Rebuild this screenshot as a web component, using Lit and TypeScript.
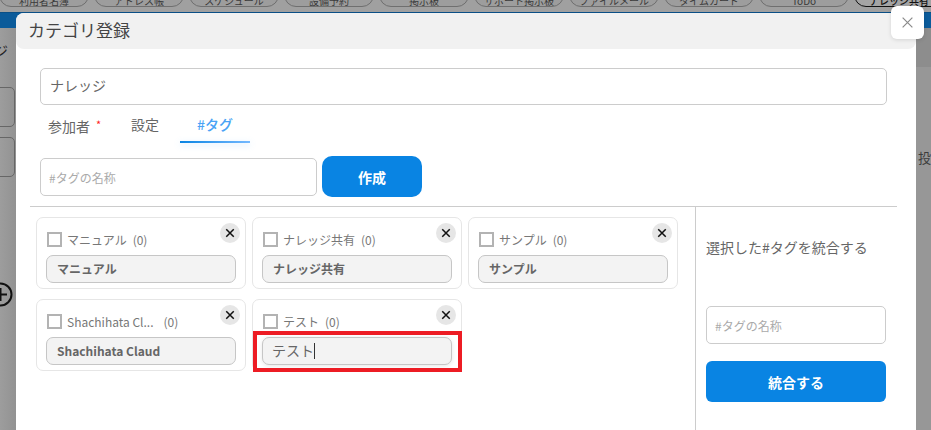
import { LitElement, html, css } from "lit";
import { customElement } from "lit/decorators.js";

const NAV = ["利用者名簿", "アドレス帳", "スケジュール", "設備予約", "掲示板", "サポート掲示板", "ファイルメール", "タイムカード", "ToDo", "ナレッジ共有"];
const TAGS = [
  { label: "マニュアル", count: "(0)", name: "マニュアル" },
  { label: "ナレッジ共有", count: "(0)", name: "ナレッジ共有" },
  { label: "サンプル", count: "(0)", name: "サンプル" },
  { label: "Shachihata Cl...", count: "(0)", name: "Shachihata Claud", gap: true },
  { label: "テスト", count: "(0)", name: "テスト", focus: true },
];

const cross = (cls: string) => html`<svg class=${cls} viewBox="0 0 12 12"><path d="M1.5 1.5 10.5 10.5M10.5 1.5 1.5 10.5"/></svg>`;

@customElement("app-root")
export class AppRoot extends LitElement {
  static styles = css`
    :host {
      display: block;
      position: relative;
      width: 931px;
      height: 430px;
      overflow: hidden;
      background: #979797;
      font-family: "Noto Sans CJK JP", "Noto Sans", sans-serif;
      color: #666;
    }
    * { box-sizing: border-box; }
    .nav {
      display: flex;
      gap: 5px;
      height: 12px;
      margin-left: -1px;
      background: #a0a0a0;
      overflow: hidden;
    }
    .pill {
      flex: none;
      width: 90px;
      height: 24px;
      margin-top: -17px;
      border: 1px solid #6f6f6f;
      border-radius: 12px;
      background: #9d9d9d;
      font-size: 10px;
      line-height: 33px;
      text-align: center;
      color: #3a3a3a;
    }
    .pill.active { border-color: #111; background: #a4a4a4; color: #111; font-weight: 500; white-space: nowrap; }
    .band { height: 16px; background: #0b5b9a; border-top: 1px solid #0a4f86; }
    .under { display: flex; justify-content: space-between; height: 402px; }
    .under-left { width: 16px; overflow: hidden; position: relative; background: linear-gradient(90deg, #9d9d9d, #929292); }
    .under-right { width: 15px; overflow: hidden; background: linear-gradient(#8d8d8d 0 39px, #979797 39px); padding: 120px 0 0 2px; font-size: 13px; white-space: nowrap; color: #3c3c3c; }
    .jig { margin: 12px 0 0 -6px; font-size: 14px; line-height: 20px; color: #222; }
    .ghost { width: 30px; margin-left: -15px; border: 1px solid #666; border-radius: 5px; height: 40px; }
    .ghost.one { margin-top: 27px; }
    .ghost.two { margin-top: 10px; }
    .plus { margin: 105px 0 0 -12px; display: block; width: 25px; height: 25px; }
    .plus path, .plus circle { fill: none; stroke: #111; stroke-width: 2; }

    .modal {
      position: absolute;
      left: 16px;
      top: 13px;
      width: 900px;
      height: 417px;
      background: #fff;
      border-radius: 8px 8px 0 0;
      display: flex;
      flex-direction: column;
    }
    .head {
      height: 36px;
      padding-left: 12px;
      background: #f1f1f1;
      border-radius: 8px;
      font-size: 17px;
      line-height: 34px;
      color: #444;
    }
    .close {
      position: absolute;
      left: 875px;
      top: -7px;
      width: 33px;
      height: 33px;
      display: flex;
      align-items: center;
      justify-content: center;
      background: #fff;
      border-radius: 6px;
      box-shadow: 0 1px 4px rgba(0,0,0,.12);
    }
    .close-x { width: 13px; height: 13px; }
    .close-x path { stroke: #8a8a8a; stroke-width: 1.1; fill: none; }
    .title-field {
      margin: 19px 29px 0 24px;
      height: 37px;
      padding-left: 9px;
      border: 1px solid #ccc;
      border-radius: 5px;
      font-size: 14px;
      line-height: 33px;
      color: #666;
    }
    .tabs { display: flex; margin: 0 0 0 24px; height: 38px; font-size: 14px; }
    .tab { line-height: 38px; color: #666; }
    .tab.a { margin-left: 8px; width: 83px; }
    .req { color: #f22; font-size: 11px; vertical-align: 3px; margin-left: 6px; }
    .tab.b { width: 49px; }
    .tab.c {
      width: 70px;
      height: 38px;
      text-align: center;
      color: #4aa3f5;
      font-weight: 500;
      position: relative;
    }
    .tab.c::after {
      content: "";
      position: absolute;
      left: 0;
      right: 0;
      bottom: 0;
      height: 2px;
      background: linear-gradient(90deg, #0984e3, #74b9ff);
      box-shadow: 0 2px 6px rgba(116,185,255,.35);
    }
    .create { display: flex; align-items: center; gap: 5px; margin: 13px 0 0 24px; height: 41px; }
    .ph {
      height: 38px;
      padding-left: 8px;
      border: 1px solid #ccc;
      border-radius: 5px;
      font-size: 12px;
      line-height: 38px;
      color: #aaa;
    }
    .create .ph { width: 277px; }
    .btn {
      background: #0984e3;
      color: #fff;
      font-size: 14px;
      font-weight: 700;
      text-align: center;
      height: 41px;
      line-height: 43px;
    }
    .create .btn { width: 100px; border-radius: 10px; }
    .rule { margin: 9px 19px 0 14px; height: 1px; background: #ccc; flex: none; }
    .lower { display: flex; flex: 1; margin-left: 14px; }
    .grid {
      width: 666px;
      padding: 10px 0 0 6px;
      display: grid;
      grid-template-columns: repeat(3, 210px);
      grid-auto-rows: 72px;
      gap: 10px 6px;
      align-content: start;
      border-right: 1px solid #ccc;
    }
    .card {
      position: relative;
      border: 1px solid #e6e6e6;
      border-radius: 7px;
      padding: 11px 9px 0 9px;
    }
    .row { display: flex; align-items: center; height: 20px; padding-left: 1px; font-size: 12px; color: #777; white-space: nowrap; }
    .box { width: 15px; height: 15px; border: 2px solid #b3b3b3; margin-right: 5px; flex: none; }
    .count { margin-left: 6px; }
    .count.wide { margin-left: 10px; }
    .del {
      position: absolute;
      left: 183px;
      top: 5px;
      width: 20px;
      height: 20px;
      border-radius: 50%;
      background: #e6e6e6;
      display: flex;
      align-items: center;
      justify-content: center;
    }
    .del-x { width: 10px; height: 10px; }
    .del-x path { stroke: #111; stroke-width: 1.8; fill: none; }
    .tag {
      margin-top: 6px;
      height: 28px;
      padding-left: 10px;
      background: #f3f3f3;
      border: 1px solid #c6c6c6;
      border-radius: 7px;
      font-size: 12px;
      font-weight: 700;
      line-height: 26px;
      color: #666;
    }
    .tag.focus {
      padding-left: 9px;
      font-size: 14px;
      font-weight: 400;
      line-height: 25px;
      box-shadow: 0 1px 4px rgba(0,0,0,.1);
    }
    .caret { display: inline-block; width: 1px; height: 16px; background: #333; vertical-align: -3px; }
    .mark {
      position: absolute;
      left: 0;
      top: 31px;
      width: 209px;
      height: 41px;
      border: 4px solid #ed1c24;
      pointer-events: none;
    }
    .side { width: 180px; margin-left: 10px; display: flex; flex-direction: column; }
    .side-title { margin-top: 30px; font-size: 14px; line-height: 20px; color: #666; }
    .side .ph { margin-top: 49px; width: 180px; }
    .side .btn { margin-top: 17px; border-radius: 6px; }
  `;

  render() {
    return html`
      <div class="nav">${NAV.map((n, i) => html`<div class="pill ${i === 9 ? "active" : ""}">${n}</div>`)}</div>
      <div class="band"></div>
      <div class="under">
        <div class="under-left">
          <div class="jig">ジ</div>
          <div class="ghost one"></div>
          <div class="ghost two"></div>
          <svg class="plus" viewBox="0 0 25 25"><circle cx="12.5" cy="12.5" r="11"/><path d="M6 12.5h13M12.5 6v13"/></svg>
        </div>
        <div class="under-right">投稿</div>
      </div>
      <div class="modal">
        <div class="head">カテゴリ登録</div>
        <div class="close">${cross("close-x")}</div>
        <div class="title-field">ナレッジ</div>
        <div class="tabs">
          <div class="tab a">参加者<span class="req">*</span></div>
          <div class="tab b">設定</div>
          <div class="tab c">#タグ</div>
        </div>
        <div class="create">
          <div class="ph">#タグの名称</div>
          <div class="btn">作成</div>
        </div>
        <div class="rule"></div>
        <div class="lower">
          <div class="grid">
            ${TAGS.map(
              (t) => html`<div class="card">
                <div class="row"><span class="box"></span><span>${t.label}</span><span class="count ${t.gap ? "wide" : ""}">${t.count}</span></div>
                <div class="tag ${t.focus ? "focus" : ""}">${t.name}${t.focus ? html`<span class="caret"></span>` : ""}</div>
                <div class="del">${cross("del-x")}</div>
                ${t.focus ? html`<div class="mark"></div>` : ""}
              </div>`
            )}
          </div>
          <div class="side">
            <div class="side-title">選択した#タグを統合する</div>
            <div class="ph">#タグの名称</div>
            <div class="btn">統合する</div>
          </div>
        </div>
      </div>
    `;
  }
}
